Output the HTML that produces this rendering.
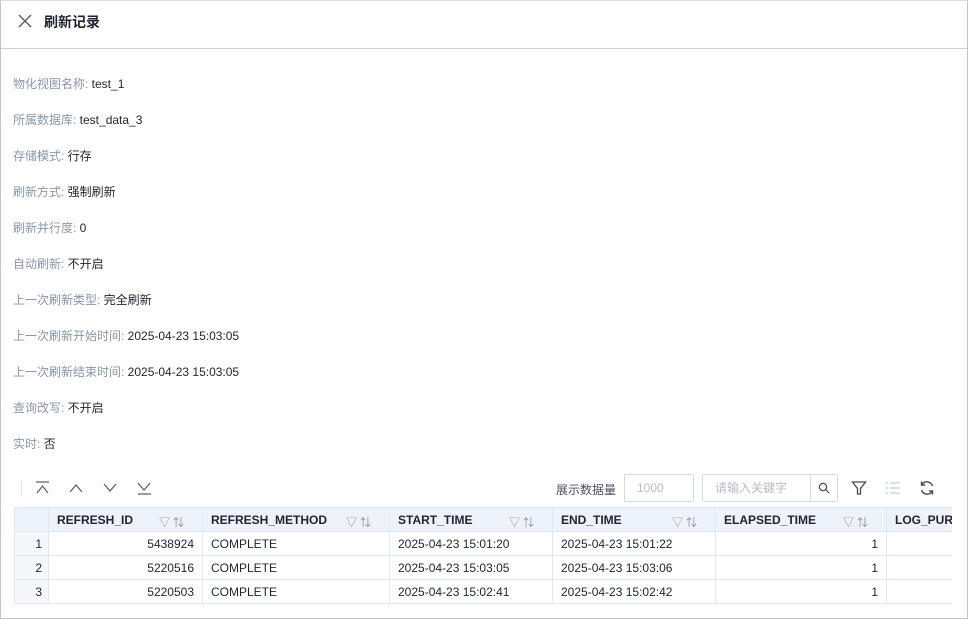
<!DOCTYPE html>
<html><head><meta charset="utf-8"><style>
*{box-sizing:border-box;margin:0;padding:0}
body{width:968px;height:619px;background:#fff;font-family:"Liberation Sans","Noto Sans CJK SC",sans-serif;font-size:12px;color:#1f2430;position:relative;overflow:hidden}
.frame{position:absolute;left:0;top:0;width:968px;height:619px;border:1px solid #c4c4c4;border-top-color:#ddd}
.hdr{position:absolute;left:1px;right:1px;top:0;height:49px;border-bottom:1px solid #c9d0de}
.title{position:absolute;left:43px;top:12px;font-size:14px;font-weight:bold;color:#1f2430}
.info{position:absolute;left:13px;font-size:12px;line-height:14px}
.info .l{color:#8c96a8}
.tb{position:absolute;left:14px;top:507px;width:937px;border-collapse:collapse;table-layout:fixed}
.tb td,.tb th{height:24px;border:1px solid #e3e7ef;padding:0 8px;white-space:nowrap;overflow:hidden;font-size:12px}
.tb td:last-child,.tb th:last-child{border-right:none}
.tb th{background:#eef2fa;text-align:left;font-weight:bold;color:#1f2430;position:relative}
.tb td.i{background:#f5f7fb;text-align:right;padding-right:6px}
.tb td.r{text-align:right}
.ic{position:absolute;top:6px;color:#8a90a0;font-weight:normal;font-size:11px}
.inp{position:absolute;top:474px;height:28px;border:1px solid #d5d9e2;border-radius:2px;color:#b8bcc6;font-size:12px;line-height:26px;padding-left:12px}
</style></head><body>
<div class="frame"></div>
<div class="hdr">
<svg style="position:absolute;left:17px;top:14px" width="14" height="14" viewBox="0 0 14 14"><path d="M1 1L13 13M13 1L1 13" stroke="#555b6a" stroke-width="1.4"/></svg>
<div class="title">刷新记录</div>
</div>
<div class="info" style="top:77px"><span class="l">物化视图名称: </span>test_1</div>
<div class="info" style="top:113px"><span class="l">所属数据库: </span>test_data_3</div>
<div class="info" style="top:149px"><span class="l">存储模式: </span>行存</div>
<div class="info" style="top:185px"><span class="l">刷新方式: </span>强制刷新</div>
<div class="info" style="top:221px"><span class="l">刷新并行度: </span>0</div>
<div class="info" style="top:257px"><span class="l">自动刷新: </span>不开启</div>
<div class="info" style="top:293px"><span class="l">上一次刷新类型: </span>完全刷新</div>
<div class="info" style="top:329px"><span class="l">上一次刷新开始时间: </span>2025-04-23 15:03:05</div>
<div class="info" style="top:365px"><span class="l">上一次刷新结束时间: </span>2025-04-23 15:03:05</div>
<div class="info" style="top:401px"><span class="l">查询改写: </span>不开启</div>
<div class="info" style="top:437px"><span class="l">实时: </span>否</div>

<div style="position:absolute;left:21px;top:481px;width:1px;height:14px;background:#dde1e8"></div>
<svg style="position:absolute;left:35px;top:481px" width="125" height="14" viewBox="0 0 125 14" fill="none" stroke="#5c6272" stroke-width="1.3">
<path d="M1 1H14M2 12L7.5 5L13 12"/>
<path d="M35 11L41 4L47 11"/>
<path d="M69 3L75 10L81 3"/>
<path d="M103 2L109 9L115 2M103 13H116"/>
</svg>
<div style="position:absolute;left:556px;top:481px;color:#4a5060">展示数据量</div>
<div class="inp" style="left:624px;width:70px">1000</div>
<div class="inp" style="left:702px;width:136px">请输入关键字</div>
<div style="position:absolute;left:810px;top:474px;width:28px;height:28px;border-left:1px solid #d5d9e2"></div>
<svg style="position:absolute;left:818px;top:482px" width="12" height="12" viewBox="0 0 12 12" fill="none" stroke="#444a58" stroke-width="1.2"><circle cx="5" cy="5" r="3.6"/><path d="M7.6 7.6L11 11"/></svg>
<svg style="position:absolute;left:851px;top:480px" width="16" height="16" viewBox="0 0 16 16" fill="none" stroke="#444a58" stroke-width="1.3"><path d="M1.5 2H14.5L9.5 8.5V14H6.5V8.5Z"/></svg>
<svg style="position:absolute;left:885px;top:481px" width="16" height="14" viewBox="0 0 16 14" fill="none" stroke="#c5c9d2" stroke-width="1.2"><path d="M1 2H3M5 2H15M1 7H3M5 7H15M1 12H3M5 12H15"/></svg>
<svg style="position:absolute;left:919px;top:480px" width="16" height="16" viewBox="0 0 16 16" fill="none" stroke="#444a58" stroke-width="1.4"><path d="M13.5 6A6 6 0 0 0 2.8 4.5M2.5 10A6 6 0 0 0 13.2 11.5M2.5 1.5V5H6M13.5 14.5V11H10"/></svg>

<table class="tb">
<colgroup><col style="width:34px"><col style="width:154px"><col style="width:187px"><col style="width:163px"><col style="width:163px"><col style="width:171px"><col style="width:65px"></colgroup>
<tr><th></th><th>REFRESH_ID<span class="ic" style="left:110px">▽ ⇅</span></th><th>REFRESH_METHOD<span class="ic" style="left:143px">▽ ⇅</span></th><th>START_TIME<span class="ic" style="left:119px">▽ ⇅</span></th><th>END_TIME<span class="ic" style="left:119px">▽ ⇅</span></th><th>ELAPSED_TIME<span class="ic" style="left:127px">▽ ⇅</span></th><th>LOG_PURG</th></tr>
<tr><td class="i">1</td><td class="r">5438924</td><td>COMPLETE</td><td>2025-04-23 15:01:20</td><td>2025-04-23 15:01:22</td><td class="r">1</td><td></td></tr>
<tr><td class="i">2</td><td class="r">5220516</td><td>COMPLETE</td><td>2025-04-23 15:03:05</td><td>2025-04-23 15:03:06</td><td class="r">1</td><td></td></tr>
<tr><td class="i">3</td><td class="r">5220503</td><td>COMPLETE</td><td>2025-04-23 15:02:41</td><td>2025-04-23 15:02:42</td><td class="r">1</td><td></td></tr>
</table>
</body></html>
